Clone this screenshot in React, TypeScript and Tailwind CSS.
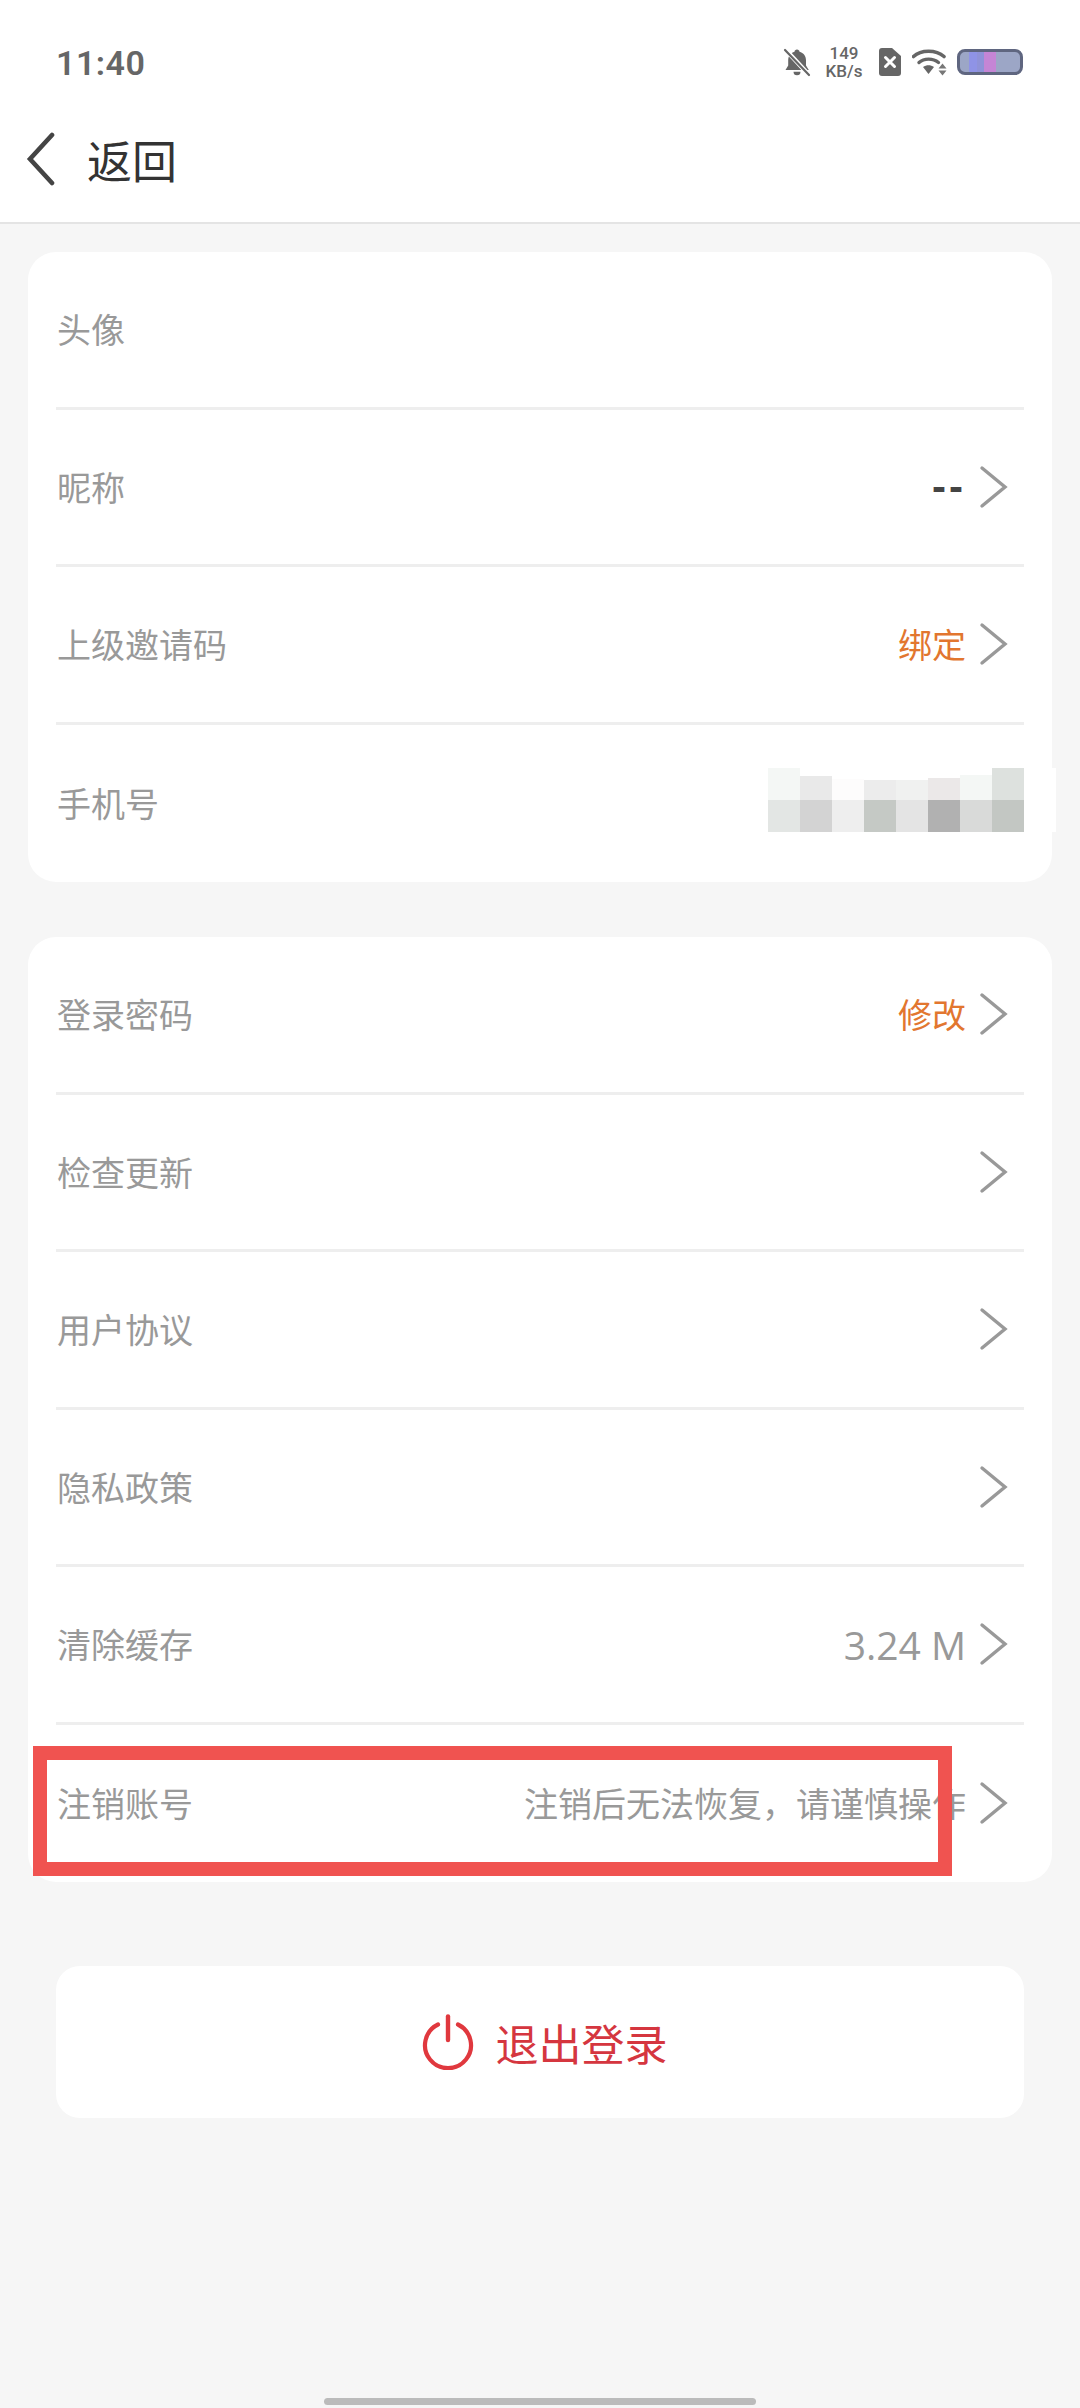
import React from 'react';

interface Row {
  label: string;
  value?: string;
  tone?: 'dark' | 'orange' | 'gray' | 'size';
  arrow?: boolean;
}

const profileRows: Row[] = [
  { label: '头像' },
  { label: '昵称', value: '--', tone: 'dark', arrow: true },
  { label: '上级邀请码', value: '绑定', tone: 'orange', arrow: true },
  { label: '手机号' },
];

const settingRows: Row[] = [
  { label: '登录密码', value: '修改', tone: 'orange', arrow: true },
  { label: '检查更新', arrow: true },
  { label: '用户协议', arrow: true },
  { label: '隐私政策', arrow: true },
  { label: '清除缓存', value: '3.24 M', tone: 'size', arrow: true },
  { label: '注销账号', value: '注销后无法恢复，请谨慎操作', tone: 'gray', arrow: true },
];

// blurred phone number, the top row has an uneven edge
const mosaic = [
  'h-[32px] bg-[#f4f7f5]', 'h-[24px] bg-[#e9e9e9]', 'h-[21px] bg-[#fdfcfc]', 'h-[20px] bg-[#ececec]',
  'h-[20px] bg-[#f0f1f0]', 'h-[22px] bg-[#ebe8e8]', 'h-[25px] bg-[#f4f7f5]', 'h-[32px] bg-[#dde1de]',
  'h-[32px] bg-[#e3e6e4]', 'h-[32px] bg-[#d3d3d3]', 'h-[32px] bg-[#eeeeee]', 'h-[32px] bg-[#c5c9c5]',
  'h-[32px] bg-[#e4e4e4]', 'h-[32px] bg-[#b1b1b1]', 'h-[32px] bg-[#d9dad9]', 'h-[32px] bg-[#c3c7c3]',
];

const valueClass = (tone?: Row['tone']) => {
  switch (tone) {
    case 'dark': return 'text-[42px] font-bold tracking-[3px] text-[#444444] font-["Liberation_Sans"]';
    case 'orange': return 'text-[34px] text-[#e2762f]';
    case 'size': return 'text-[39px] text-[#999999] font-["Open_Sans"]';
    default: return 'text-[34px] text-[#999999]';
  }
};

const Chevron = () => (
  <svg width="29" height="44" viewBox="0 0 29 44" fill="none" className="shrink-0">
    <path d="M3 3 L26 22 L3 41" stroke="#999999" strokeWidth="3.4" strokeLinecap="round" strokeLinejoin="miter" />
  </svg>
);

const StatusIcons = () => (
  <div className="flex items-center">
    <svg width="30" height="30" viewBox="0 0 30 30">
      <path d="M15 2.500c1.500 0 2.400 1 2.500 2.200 4 1 6.500 4.300 6.500 8.600v5.300l2.800 4.400H3.500l2.700-4.400v-5.300c0-4.300 2.500-7.600 6.300-8.600 .1-1.200 1-2.200 2.500-2.200z" fill="#666666" />
      <path d="M11.500 24.800h7a3.500 3.500 0 0 1-7 0z" fill="#666666" />
      <path d="M3 2 L27 28" stroke="#ffffff" strokeWidth="4.500" />
      <path d="M3 3 L27 28" stroke="#666666" strokeWidth="2.200" strokeLinecap="round" />
    </svg>
    <div className="ml-[12px] flex w-[40px] flex-col items-center text-[17px] leading-[18px] font-medium text-[#666666]" style={{ fontFamily: 'Roboto, sans-serif' }}>
      <span>149</span>
      <span>KB/s</span>
    </div>
    <svg width="24" height="30" viewBox="0 0 24 30" className="ml-[14px]">
      <path d="M4 1h10l9 8v17a3 3 0 0 1-3 3H4a3 3 0 0 1-3-3V4a3 3 0 0 1 3-3z" fill="#666666" />
      <path d="M7.500 10.500 L16.500 19.500 M16.500 10.500 L7.500 19.500" stroke="#ffffff" strokeWidth="3" strokeLinecap="round" />
    </svg>
    <svg width="36" height="28" viewBox="0 0 36 28" className="ml-[10px]">
      <path d="M1.500 8.500 C9 1.500 24 1.500 32 8.500" fill="none" stroke="#666666" strokeWidth="3.600" strokeLinecap="round" />
      <path d="M7 14.500 C12 10 21 10 26.500 14.500" fill="none" stroke="#666666" strokeWidth="3.400" strokeLinecap="round" />
      <path d="M11 19 C14.500 16.500 18.500 16.500 22 19 L16.500 26z" fill="#666666" />
      <path d="M30.500 15.500 L34.500 20.500 H26.500z M26.500 22.500 H34.500 L30.500 27.500z" fill="#777777" />
    </svg>
    <div className="ml-[9px] flex h-[26px] w-[66px] overflow-hidden rounded-[8px] border-[3px] border-[#5f6680] bg-[#9ca6c6] pl-[9px]">
      <div className="w-[8px] bg-[#8f93e6]" />
      <div className="w-[7px] bg-[#8f92d8]" />
      <div className="w-[12px] bg-[#c585d5]" />
    </div>
  </div>
);

const SettingRow = ({ row, last }: { row: Row; last: boolean }) => (
  <div className={`flex h-[157.5px] items-center justify-between pr-[16px] ${last ? '' : 'border-b-[3px] border-[#eeeeee]'}`}>
    <span className="pl-[1px] text-[34px] leading-none text-[#999999]">{row.label}</span>
    <div className="flex items-center gap-[13px]">
      {row.value && <span className={`leading-none ${valueClass(row.tone)}`}>{row.value}</span>}
      {row.arrow && <Chevron />}
    </div>
  </div>
);

const Card = ({ rows, children }: { rows: Row[]; children?: React.ReactNode }) => (
  <div className="relative mx-[28px] rounded-[28px] bg-white px-[28px]">
    {rows.map((row, i) => (
      <SettingRow key={row.label} row={row} last={i === rows.length - 1} />
    ))}
    {children}
  </div>
);

export default function App() {
  return (
    <div
      className="flex h-[2408px] w-[1080px] flex-col overflow-hidden bg-[#f6f6f6]"
      style={{ fontFamily: '"Noto Sans CJK SC", "Noto Sans", sans-serif' }}
    >
      <header className="h-[224px] border-b-[2px] border-[#e4e4e4] bg-white">
        <div className="flex h-[100px] items-start justify-between pt-[46px] pr-[57px] pl-[56px]">
          <span className="text-[34px] leading-[34px] font-semibold tracking-[0.5px] text-[#666666]" style={{ fontFamily: 'Roboto, sans-serif' }}>11:40</span>
          <div className="-mt-[2px]">
            <StatusIcons />
          </div>
        </div>
        <div className="flex h-[122px] items-center pb-[4px] pl-[26px]">
          <svg width="30" height="54" viewBox="0 0 30 54" fill="none">
            <path d="M26 3 L4 27 L26 51" stroke="#444444" strokeWidth="4.600" strokeLinecap="round" strokeLinejoin="miter" />
          </svg>
          <span className="ml-[31px] text-[45px] leading-none text-[#333333]">返回</span>
        </div>
      </header>

      <div className="mt-[28px]">
        <Card rows={profileRows}>
          <div className="absolute top-[516px] right-[-4px] bg-white pr-[32px]">
            <div className="grid w-[256px] grid-cols-8 items-end">
              {mosaic.map((cls, i) => (
                <div key={i} className={cls} />
              ))}
            </div>
          </div>
        </Card>
      </div>

      <div className="mt-[55px]">
        <Card rows={settingRows}>
          <div className="absolute top-[809px] left-[5px] h-[130px] w-[919px] border-[14px] border-[#f05350]" />
        </Card>
      </div>

      <button className="mx-[56px] mt-[84px] flex h-[152px] items-center justify-center rounded-[24px] bg-white pl-[9px]">
        <svg width="52" height="56" viewBox="0 0 52 56" fill="none">
          <path d="M16 10.500 A23 23 0 1 0 36 10.500" stroke="#e0383e" strokeWidth="4.200" strokeLinecap="round" />
          <path d="M26 2.500 V26" stroke="#e0383e" strokeWidth="4.400" strokeLinecap="round" />
        </svg>
        <span className="ml-[22px] text-[43px] leading-none text-[#d5363f]">退出登录</span>
      </button>

      <div className="mx-auto mt-auto mb-[3px] h-[7px] w-[432px] rounded-full bg-[#bbbbbb]" />
    </div>
  );
}
